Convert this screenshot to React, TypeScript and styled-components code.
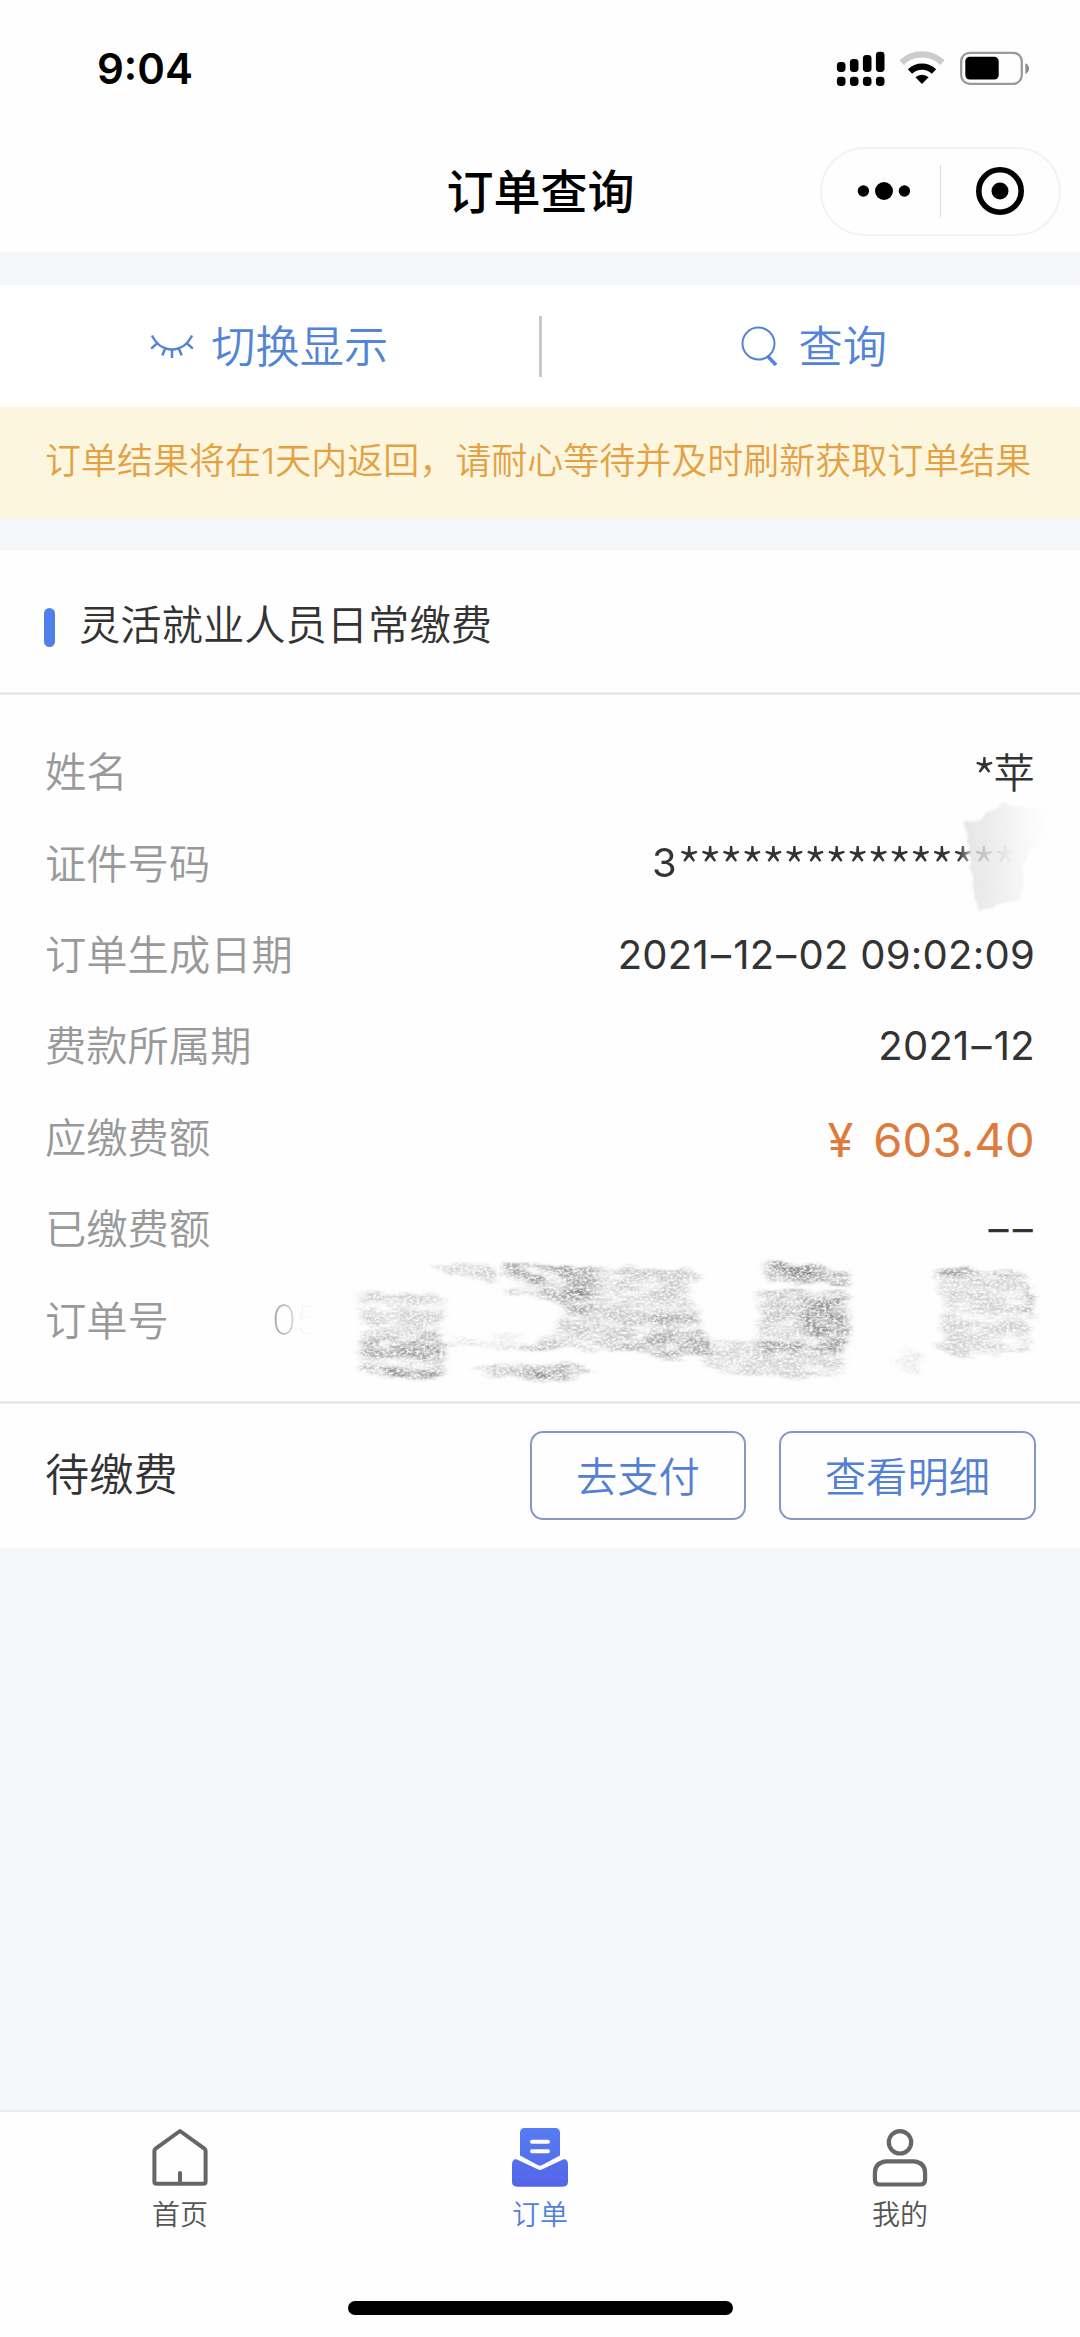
import React from "react";
import styled, { createGlobalStyle, css } from "styled-components";

const GlobalStyle = createGlobalStyle`
  *, *::before, *::after { box-sizing: border-box; }
  body { margin: 0; background: #fff; }
  button { font: inherit; background: none; border: 0; padding: 0; }
`;

const cjk = `"Noto Sans CJK SC", sans-serif`;
const mixed = `Inter, "Noto Sans CJK SC", sans-serif`;

const Screen = styled.div`
  width: 1080px;
  height: 2337px;
  display: flex;
  flex-direction: column;
  background: #f4f6fa;
  color: #333;
  font-family: ${cjk};
  font-weight: 350;
  overflow: hidden;
`;

const Header = styled.header`
  height: 252px;
  background: #fefefe;
`;

const StatusBar = styled.div`
  height: 137px;
  padding: 0 50px 0 97px;
  display: flex;
  justify-content: space-between;
  align-items: center;
`;

const Clock = styled.time`
  font: 600 42px/50px Inter, sans-serif;
  color: #000;
`;

const NavBar = styled.div`
  height: 108px;
  padding: 0 19px 0 20px;
  display: grid;
  grid-template-columns: 1fr auto 1fr;
  align-items: center;
`;

const NavTitle = styled.h1`
  grid-column: 2;
  margin: 0;
  padding-bottom: 4px;
  font-weight: 500;
  font-size: 47px;
  line-height: 68px;
  color: #000;
`;

const Capsule = styled.div`
  justify-self: end;
  width: 241px;
  height: 89px;
  border: 2px solid #f2f2f2;
  border-radius: 45px;
  display: flex;
  align-items: center;
`;

const CapsuleHalf = styled.div`
  flex: 1;
  display: flex;
  justify-content: center;
`;

const CapsuleRule = styled.div`
  width: 1px;
  height: 52px;
  background: #dcdcdc;
`;

const Toolbar = styled.section`
  margin-top: 33px;
  height: 122px;
  background: #fff;
  display: flex;
  align-items: center;
`;

const ToolButton = styled.button`
  flex: 1;
  padding-bottom: 4px;
  display: flex;
  justify-content: center;
  align-items: center;
  color: #5384d6;
  font-size: 44.2px;
  line-height: 64px;
`;

const ToolIcon = styled.svg<{ $gap: number; $lead?: number }>`
  margin: 3px ${(p) => p.$gap}px 0 ${(p) => p.$lead ?? 0}px;
  flex: none;
`;

const ToolRule = styled.div`
  width: 3px;
  height: 61px;
  background: #c8c8c8;
`;

const Notice = styled.p`
  margin: 0;
  height: 111px;
  padding: 0 0 3px 45px;
  display: flex;
  align-items: center;
  background: #fcf6df;
  color: #e4a144;
  font: 350 36px/52px ${mixed};
  white-space: nowrap;
`;

const Card = styled.article`
  margin-top: 32px;
  height: 998px;
  background: #fefefe;
  display: flex;
  flex-direction: column;
`;

const CardHeader = styled.div`
  height: 145px;
  padding: 2px 44px 0;
  display: flex;
  align-items: center;
  border-bottom: 3px solid #e9e9e9;
`;

const Marker = styled.span`
  width: 11px;
  height: 39px;
  margin: 10px 24px 0 0;
  border-radius: 6px;
  background: #5080ea;
`;

const CardTitle = styled.h2`
  margin: 0;
  font-weight: 350;
  font-size: 41.3px;
  line-height: 60px;
`;

const Details = styled.dl`
  margin: 0;
  height: 709px;
  padding: 31px 45px 35px;
  display: grid;
  grid-template-rows: repeat(7, 1fr);
  border-bottom: 3px solid #e9e9e9;
`;

const Row = styled.div`
  position: relative;
  display: flex;
  justify-content: space-between;
  align-items: center;
`;

const Label = styled.dt`
  padding-bottom: 5px;
  font-size: 41.3px;
  line-height: 60px;
  color: #999;
`;

const Value = styled.dd<{ $amount?: boolean }>`
  margin: 0;
  font: 400 40px/60px ${mixed};
  letter-spacing: 0.25px;
  white-space: pre;
  ${(p) =>
    p.$amount &&
    css`
      padding-top: 6px;
      font-size: 47px;
      color: #dd7a3c;
    `}
`;

const Dash = styled.span`
  margin: 0 2px;
`;

const Yen = styled.span`
  margin-right: 6px;
`;

const Person = styled.span`
  font-family: ${cjk};
  font-weight: 350;
  font-size: 41.3px;
`;

const Stars = styled.span`
  font-family: ${cjk};
  font-weight: 300;
  font-size: 55px;
  line-height: 0;
  vertical-align: -11.5px;
  letter-spacing: -3.3px;
`;

const IdNumber = styled.span`
  display: inline-block;
  margin-right: 21px;
  mask-image: linear-gradient(to right, #000 306px, rgba(0, 0, 0, 0.4) 320px, transparent 362px);
`;

const OrderNumber = styled(Value)`
  margin: 0 auto 0 103px;
  color: #aaa;
  font-weight: 250;
  mask-image: linear-gradient(to right, #000 4px, rgba(0, 0, 0, 0.45) 22px, rgba(0, 0, 0, 0.12) 27px, transparent 46px);
`;

const Smudge = styled.svg<{ $x: number; $y: number }>`
  position: absolute;
  left: ${(p) => p.$x}px;
  top: ${(p) => p.$y}px;
  pointer-events: none;
`;

const CardFooter = styled.footer`
  flex: 1;
  padding: 0 44px 1px 45px;
  display: flex;
  align-items: center;
`;

const State = styled.span`
  margin-right: auto;
  padding-bottom: 7px;
  font-size: 44.2px;
  line-height: 64px;
`;

const OutlineButton = styled.button`
  height: 89px;
  padding: 0 44px 4px;
  margin-left: 33px;
  border: 2px solid #8598c4;
  border-radius: 13px;
  color: #5380d2;
  font-size: 41.3px;
  line-height: 60px;
`;

const TabBar = styled.nav`
  margin-top: auto;
  height: 227px;
  border-top: 2px solid #e9ebf2;
  background: #fefefe;
  display: flex;
  flex-direction: column;
  align-items: center;
`;

const Tabs = styled.div`
  align-self: stretch;
  height: 189px;
  padding-top: 15px;
  display: grid;
  grid-template-columns: repeat(3, 1fr);
`;

const Tab = styled.div<{ $active?: boolean }>`
  display: flex;
  flex-direction: column;
  align-items: center;
  gap: 4px;
  font-size: 28px;
  line-height: 40px;
  color: ${(p) => (p.$active ? "#5380d8" : "#555")};
`;

const HomeIndicator = styled.div`
  width: 385px;
  height: 14px;
  border-radius: 7px;
  background: #000;
`;

const StatusIcons = () => (
  <svg width="194" height="36" viewBox="836 51 194 36">
    {[62, 59, 55, 51.7].map((top, i) => (
      <React.Fragment key={top}>
        <rect x={836.9 + i * 13} y={top} width="8.6" height={72 - top} rx="3.4" />
        <rect x={836.9 + i * 13} y="76.7" width="8.6" height="9.2" rx="3.4" />
      </React.Fragment>
    ))}
    <path d="M901.6 62.6a29.5 29.5 0 0 1 40.8 0" fill="none" stroke="#ccc" strokeWidth="6.4" />
    <path d="M910 71.4a17.3 17.3 0 0 1 24 0" fill="none" stroke="#000" strokeWidth="6.2" />
    <path d="M922 84l-6.6-6.7a9.6 9.6 0 0 1 13.2 0z" />
    <rect x="961.2" y="52.8" width="60.6" height="31" rx="8.5" fill="none" stroke="#999" strokeWidth="2.3" />
    <rect x="965.3" y="56.8" width="33.4" height="22.8" rx="4.5" />
    <path d="M1025.4 63.2c4.8 1.6 4.8 9.2 0 10.8z" fill="#888" />
  </svg>
);

const MoreIcon = () => (
  <svg width="59" height="20" viewBox="-5 0 59 20">
    <circle cx="6.4" cy="10" r="5.7" />
    <circle cx="27" cy="10" r="9" />
    <circle cx="47.4" cy="10" r="5.7" />
  </svg>
);

const TargetIcon = () => (
  <svg width="50" height="50" viewBox="0 0 50 50">
    <circle cx="25" cy="25" r="21.2" fill="none" stroke="#000" strokeWidth="5.6" />
    <circle cx="25" cy="25" r="8.5" />
  </svg>
);

const ClosedEyeIcon = () => (
  <ToolIcon $gap={17} width="44" height="26" viewBox="0 0 44 26" fill="none" stroke="#5384d6" strokeWidth="2.5">
    <path d="M2 2.5C11 21 33 21 42 2.5" />
    <path d="M8 9.5L1.2 15.6M15.5 14.8l-3.2 7.6M22 16.4V25M28.5 14.8l3.2 7.6M36 9.5l6.8 6.1" />
  </ToolIcon>
);

const SearchIcon = () => (
  <ToolIcon $gap={21} $lead={6} width="37" height="40" viewBox="0 0 37 40" fill="none" stroke="#5384d6">
    <circle cx="17.5" cy="17.5" r="16" strokeWidth="2" />
    <path d="M27 30.5l8 8.5" strokeWidth="3.6" />
  </ToolIcon>
);

const HomeIcon = () => (
  <svg width="60" height="62" viewBox="150 2127 60 62" fill="none" stroke="#666" strokeWidth="4" strokeLinejoin="round" strokeLinecap="round">
    <path d="M180 2131L155.6 2148.6Q154.4 2149.5 154.4 2151V2181.5Q154.4 2183.8 156.7 2183.8H203.3Q205.6 2183.8 205.6 2181.5V2151Q205.6 2149.5 204.4 2148.6Z" />
    <path d="M180 2173V2183" />
  </svg>
);

const OrderIcon = () => (
  <svg width="60" height="62" viewBox="510 2127 60 62">
    <defs>
      <linearGradient id="order" gradientUnits="userSpaceOnUse" x1="540" y1="2128" x2="540" y2="2187">
        <stop offset="0" stopColor="#567cf2" />
        <stop offset="1" stopColor="#5565e8" />
      </linearGradient>
    </defs>
    <path
      fill="url(#order)"
      d="M525 2128H555Q560 2128 560 2133V2155.5L541.8 2165.3Q540 2166.2 538.2 2165.3L520 2155.5V2133Q520 2128 525 2128ZM517 2159.5L538.2 2169.5Q540 2170.3 541.8 2169.5L563 2159.5Q568 2158.5 568 2165V2181.5Q568 2186.7 562.8 2186.7H517.2Q512 2186.7 512 2181.5V2165Q512 2158.5 517 2159.5Z"
    />
    <path d="M532 2141.7H548M532 2151.2H548" stroke="#fff" strokeWidth="4" strokeLinecap="round" />
  </svg>
);

const PersonIcon = () => (
  <svg width="60" height="62" viewBox="870 2127 60 62" fill="none" stroke="#666" strokeWidth="4.2">
    <circle cx="900" cy="2142.3" r="11.2" />
    <path d="M886 2161.3H914Q925.1 2162.5 925.1 2173V2179.5Q925.1 2184.5 920 2184.5H880Q874.9 2184.5 874.9 2179.5V2173Q874.9 2162.5 886 2161.3Z" />
  </svg>
);

// Hand-rubbed cover over the end of the ID number.
const IdSmudge = () => (
  <Smudge $x={905} $y={-28} width="130" height="130" viewBox="950 789 130 130">
    <defs>
      <linearGradient id="fade">
        <stop offset="0" stopColor="#c8c8c8" stopOpacity="0.46" />
        <stop offset="0.45" stopColor="#d2d2d2" stopOpacity="0.32" />
        <stop offset="1" stopColor="#ddd" stopOpacity="0" />
      </linearGradient>
      <filter id="chalk" x="-10%" y="-10%" width="120%" height="120%">
        <feTurbulence type="fractalNoise" baseFrequency="0.06 0.1" numOctaves="3" seed="4" result="n" />
        <feDisplacementMap in="SourceGraphic" in2="n" scale="7" />
        <feGaussianBlur stdDeviation="1" />
      </filter>
    </defs>
    <path filter="url(#chalk)" fill="url(#fade)" d="M965 822L980 820L984 812L1004 805L1048 808L1046 835L1024 860L1020 900L978 911L970 860Z" />
  </Smudge>
);

type Patch = { tone: number; d: string };

const strokes: Patch[] = [
  { tone: 0.26, d: "M357 1289L444 1295L442 1335L448 1340L442 1377L378 1376L358 1368L364 1350L360 1315Z" },
  { tone: 0.38, d: "M362 1341L400 1336L445 1329L442 1357L405 1359L366 1358Z" },
  { tone: 0.45, d: "M358 1365L385 1365L420 1371L442 1370L442 1377L380 1376Z" },
  { tone: 0.28, d: "M433 1268L460 1262L488 1264L500 1274L486 1279L458 1275Z" },
  { tone: 0.26, d: "M503 1262L560 1264L596 1268L590 1296L570 1298L545 1293L512 1297L505 1290L520 1283L503 1276Z" },
  { tone: 0.45, d: "M505 1262L545 1265L580 1267L570 1277L535 1283L515 1275Z" },
  { tone: 0.36, d: "M543 1288L590 1290L596 1312L582 1322L565 1305L545 1298Z" },
  { tone: 0.3, d: "M560 1265L640 1266L700 1272L700 1280L686 1295L700 1310L698 1326L711 1338L708 1354L680 1358L625 1351L575 1348L520 1350L555 1330L565 1300Z" },
  { tone: 0.24, d: "M620 1318L695 1315L711 1348L678 1358L625 1350Z" },
  { tone: 0.32, d: "M470 1366L515 1362L550 1364L573 1361L595 1370L564 1382L528 1379L480 1375Z" },
  { tone: 0.45, d: "M520 1371L545 1366L570 1366L562 1382L532 1378Z" },
  { tone: 0.14, d: "M445 1332L475 1338L520 1332L560 1340L530 1350L450 1345Z" },
  { tone: 0.26, d: "M706 1340L760 1340L845 1346L844 1373L790 1377L730 1373L704 1366Z" },
  { tone: 0.46, d: "M757 1262L762 1257L780 1261L810 1264L850 1271L846 1285L820 1284L772 1284L765 1272Z" },
  { tone: 0.4, d: "M770 1262L812 1265L815 1284L800 1280L785 1270Z" },
  { tone: 0.33, d: "M755 1290L848 1289L851 1330L844 1350L770 1352L756 1338L764 1320Z" },
  { tone: 0.42, d: "M800 1290L840 1290L846 1331L840 1349L822 1345L802 1320Z" },
  { tone: 0.28, d: "M762 1339L800 1337L830 1346L800 1356L764 1354Z" },
  { tone: 0.26, d: "M934 1266L1024 1273L1030 1352L960 1355L936 1348L944 1334L938 1325L948 1312L938 1290Z" },
  { tone: 0.42, d: "M934 1266L1024 1272L1026 1277L940 1274Z" },
  { tone: 0.55, d: "M1025 1280L1032 1292L1034 1315L1028 1319Z" },
  { tone: 0.14, d: "M888 1358L910 1348L924 1354L918 1374L900 1366Z" },
];

// Pencil-like hatching over the order number.
const OrderSmudge = () => (
  <Smudge $x={275} $y={-34} width="725" height="150" viewBox="320 1240 725 150">
    <defs>
      <filter id="pencil" filterUnits="userSpaceOnUse" x="320" y="1240" width="725" height="150" colorInterpolationFilters="sRGB">
        <feTurbulence type="fractalNoise" baseFrequency="0.04 0.16" numOctaves="4" seed="8" result="edge" />
        <feDisplacementMap in="SourceGraphic" in2="edge" scale="15" xChannelSelector="R" yChannelSelector="R" result="rough" />
        <feGaussianBlur in="rough" stdDeviation="3.2 1.1" result="soft" />
        <feTurbulence type="fractalNoise" baseFrequency="0.3 0.42" numOctaves="4" seed="11" />
        <feColorMatrix values="0 0 0 0 0  0 0 0 0 0  0 0 0 0 0  2.2 0 0 0 -0.42" result="grain" />
        <feComposite in="soft" in2="grain" operator="in" result="grained" />
        <feTurbulence type="fractalNoise" baseFrequency="0.035 0.09" numOctaves="3" seed="21" />
        <feColorMatrix values="0 0 0 0 0  0 0 0 0 0  0 0 0 0 0  2.2 0 0 0 -0.35" result="cloud" />
        <feComposite in="grained" in2="cloud" operator="in" />
      </filter>
    </defs>
    <g filter="url(#pencil)" fill="#555">
      {strokes.map((s) => (
        <path key={s.d} d={s.d} fillOpacity={s.tone} />
      ))}
    </g>
  </Smudge>
);

export default function App() {
  return (
    <>
      <GlobalStyle />
      <Screen>
        <Header>
          <StatusBar>
            <Clock>9:04</Clock>
            <StatusIcons />
          </StatusBar>
          <NavBar>
            <NavTitle>订单查询</NavTitle>
            <Capsule>
              <CapsuleHalf><MoreIcon /></CapsuleHalf>
              <CapsuleRule />
              <CapsuleHalf><TargetIcon /></CapsuleHalf>
            </Capsule>
          </NavBar>
        </Header>

        <Toolbar>
          <ToolButton><ClosedEyeIcon />切换显示</ToolButton>
          <ToolRule />
          <ToolButton><SearchIcon />查询</ToolButton>
        </Toolbar>
        <Notice>订单结果将在1天内返回，请耐心等待并及时刷新获取订单结果</Notice>

        <Card>
          <CardHeader>
            <Marker />
            <CardTitle>灵活就业人员日常缴费</CardTitle>
          </CardHeader>
          <Details>
            <Row>
              <Label>姓名</Label>
              <Value><Stars>*</Stars><Person>苹</Person></Value>
            </Row>
            <Row>
              <Label>证件号码</Label>
              <Value><IdNumber>3<Stars>****************</Stars></IdNumber></Value>
              <IdSmudge />
            </Row>
            <Row>
              <Label>订单生成日期</Label>
              <Value>2021<Dash>–</Dash>12<Dash>–</Dash>02 09:02:09</Value>
            </Row>
            <Row>
              <Label>费款所属期</Label>
              <Value>2021<Dash>–</Dash>12</Value>
            </Row>
            <Row>
              <Label>应缴费额</Label>
              <Value $amount><Yen>¥</Yen> 603.40</Value>
            </Row>
            <Row>
              <Label>已缴费额</Label>
              <Value><Dash>–</Dash><Dash>–</Dash></Value>
            </Row>
            <Row>
              <Label>订单号</Label>
              <OrderNumber>05</OrderNumber>
              <OrderSmudge />
            </Row>
          </Details>
          <CardFooter>
            <State>待缴费</State>
            <OutlineButton>去支付</OutlineButton>
            <OutlineButton>查看明细</OutlineButton>
          </CardFooter>
        </Card>

        <TabBar>
          <Tabs>
            <Tab><HomeIcon />首页</Tab>
            <Tab $active><OrderIcon />订单</Tab>
            <Tab><PersonIcon />我的</Tab>
          </Tabs>
          <HomeIndicator />
        </TabBar>
      </Screen>
    </>
  );
}
